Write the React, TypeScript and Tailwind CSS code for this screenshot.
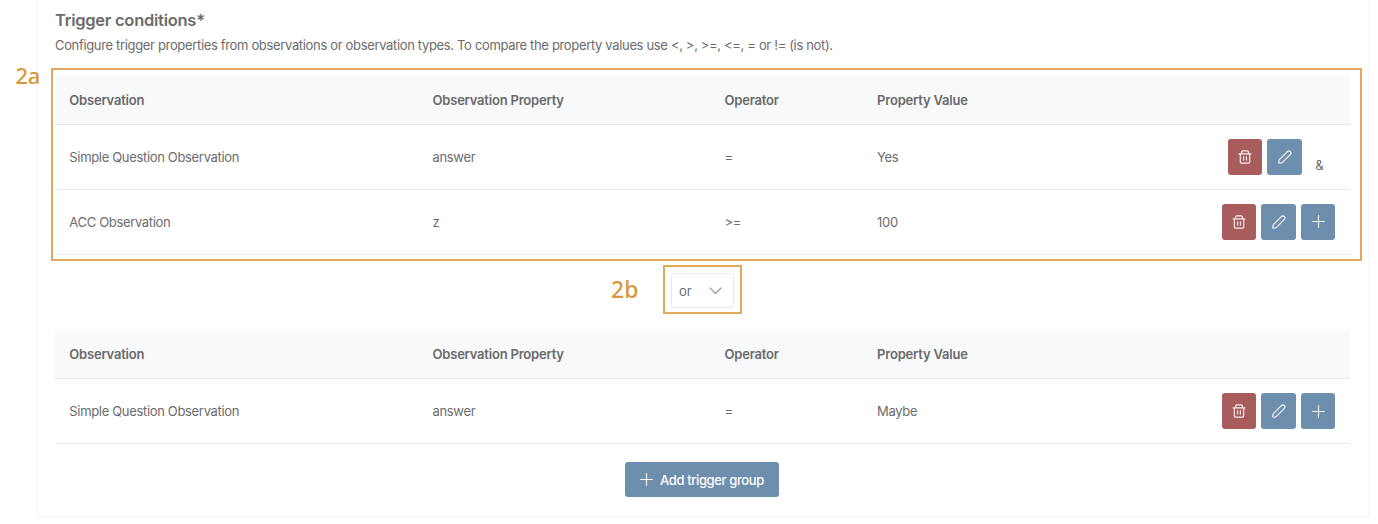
import React from "react";

function TrashIcon() {
  return (
    <svg width="14" height="14" viewBox="0 0 14 14" fill="none" stroke="currentColor" strokeWidth="1.15" strokeLinecap="round" strokeLinejoin="round">
      <path d="M1 3.8h12M2.3 3.8v8.1q0 1.2 1.2 1.2h7q1.2 0 1.2-1.2V3.8M3.6 3.6V2.1q0-1.2 1.2-1.2h4.4q1.2 0 1.2 1.2v1.5M5.6 6.8v3.3M8.4 6.8v3.3" />
    </svg>
  );
}

function PencilIcon() {
  return (
    <svg width="14" height="14" viewBox="0 0 14 14" fill="none" stroke="currentColor" strokeWidth="1.2" strokeLinecap="round" strokeLinejoin="round">
      <path d="M1.4 13.1q-.7 0-.6-.7l.3-2q.1-.6.5-1L9.5 1.5q1.3-1.3 2.6 0l.3.3q1.3 1.3 0 2.6l-7.9 7.9q-.4.4-1 .5z" />
    </svg>
  );
}

function PlusIcon() {
  return (
    <svg width="13" height="13" viewBox="0 0 13 13" fill="none" stroke="currentColor" strokeWidth="1.2" strokeLinecap="round">
      <path d="M6.5.7v11.6M.7 6.5h11.6" />
    </svg>
  );
}

function IconButton({ danger = false, children }: { danger?: boolean; children: React.ReactNode }) {
  return (
    <button className={`flex h-[35.5px] w-[34.3px] items-center justify-center rounded-[3px] pl-px text-white/90 ${danger ? "bg-[#a95c5c]" : "bg-[#6d8eac]"}`}>
      {children}
    </button>
  );
}

type Condition = { observation: string; property: string; operator: string; value: string; joined?: boolean };

const columns = "grid grid-cols-[363.2px_292px_152.6px_1fr_auto] items-center pr-[14.7px] pl-[14.3px]";

function ConditionTable({ rows }: { rows: Condition[] }) {
  return (
    <div>
      <div className={`${columns} h-[48.6px] border-b border-[#e6eaee] bg-[#f8f9fb] pt-px text-[13px] font-semibold tracking-[-0.2px] text-[#6a6a6a]`}>
        <span>Observation</span>
        <span>Observation Property</span>
        <span>Operator</span>
        <span>Property Value</span>
      </div>
      {rows.map((r) => (
        <div key={r.observation} className={`${columns} h-[65px] border-b border-[#e9ebee]`}>
          <span className="pt-[2px]">{r.observation}</span>
          <span className="pt-[2px]">{r.property}</span>
          <span className="pt-[2px]">{r.operator}</span>
          <span className="pt-[2px]">{r.value}</span>
          <div className="flex items-center gap-[5.3px]">
            <IconButton danger><TrashIcon /></IconButton>
            <IconButton><PencilIcon /></IconButton>
            {r.joined ? (
              <span className="w-[28.5px] pt-[18px] pl-[8.5px]">&amp;</span>
            ) : (
              <IconButton><PlusIcon /></IconButton>
            )}
          </div>
        </div>
      ))}
    </div>
  );
}

export default function App() {
  return (
    <div className="h-[524px] overflow-hidden bg-white pr-[9px] pl-9 font-['Inter',sans-serif] text-[13px] tracking-[-0.33px] text-[#6c6c6c]">
      <div className="h-[517px] rounded-b-[4px] border border-t-0 border-[#f5f5f6] px-[18px]">
        <h2 className="pt-[9px] text-[16.5px] leading-[22px] font-semibold tracking-[-0.26px]">Trigger conditions*</h2>
        <p className="mt-1 h-10 leading-5 tracking-[-0.34px]">
          Configure trigger properties from observations or observation types. To compare the property values use &lt;, &gt;, &gt;=, &lt;=, = or != (is not).
        </p>
        <div className="relative mt-[1.4px]">
          <ConditionTable
            rows={[
              { observation: "Simple Question Observation", property: "answer", operator: "=", value: "Yes", joined: true },
              { observation: "ACC Observation", property: "z", operator: ">=", value: "100" },
            ]}
          />
          <div className="pointer-events-none absolute -top-2 -right-[11.5px] -bottom-1.5 -left-1 border-2 border-[#e2aa58]" />
          <span className="absolute -top-[15px] -left-[39.5px] font-['Noto_Sans',sans-serif] text-[22px] leading-7 font-medium tracking-[-0.3px] text-[#d8983a]">2a</span>
        </div>
        <div className="relative flex h-[75.6px] justify-center pt-[10px]">
          <span className="absolute top-[18px] left-[556px] font-['Noto_Sans',sans-serif] text-[23px] leading-8 font-medium tracking-normal text-[#d8983a]">2b</span>
          <div className="h-[49px] w-[79px] border-2 border-[#e2aa58] p-[6px]">
            <button className="flex h-[35px] w-[63px] items-center justify-between rounded-[3px] border border-[#e6eaee] pr-[11px] pl-[7px]">
              <span className="pt-[2px] tracking-normal">or</span>
              <svg className="mt-px" width="13" height="8" viewBox="0 0 13 8" fill="none" stroke="#9b9b9b" strokeWidth="1.2" strokeLinecap="round" strokeLinejoin="round">
                <path d="M1 1l5.5 5.5L12 1" />
              </svg>
            </button>
          </div>
        </div>
        <ConditionTable rows={[{ observation: "Simple Question Observation", property: "answer", operator: "=", value: "Maybe" }]} />
        <div className="flex justify-center pt-[17.8px] pr-px">
          <button className="flex h-[35.5px] w-[154px] items-center gap-[7px] rounded-[3px] bg-[#6d8eac] pl-[15px] text-white">
            <PlusIcon />
            <span className="pt-[2px] font-medium tracking-[-0.38px]">Add trigger group</span>
          </button>
        </div>
      </div>
    </div>
  );
}
